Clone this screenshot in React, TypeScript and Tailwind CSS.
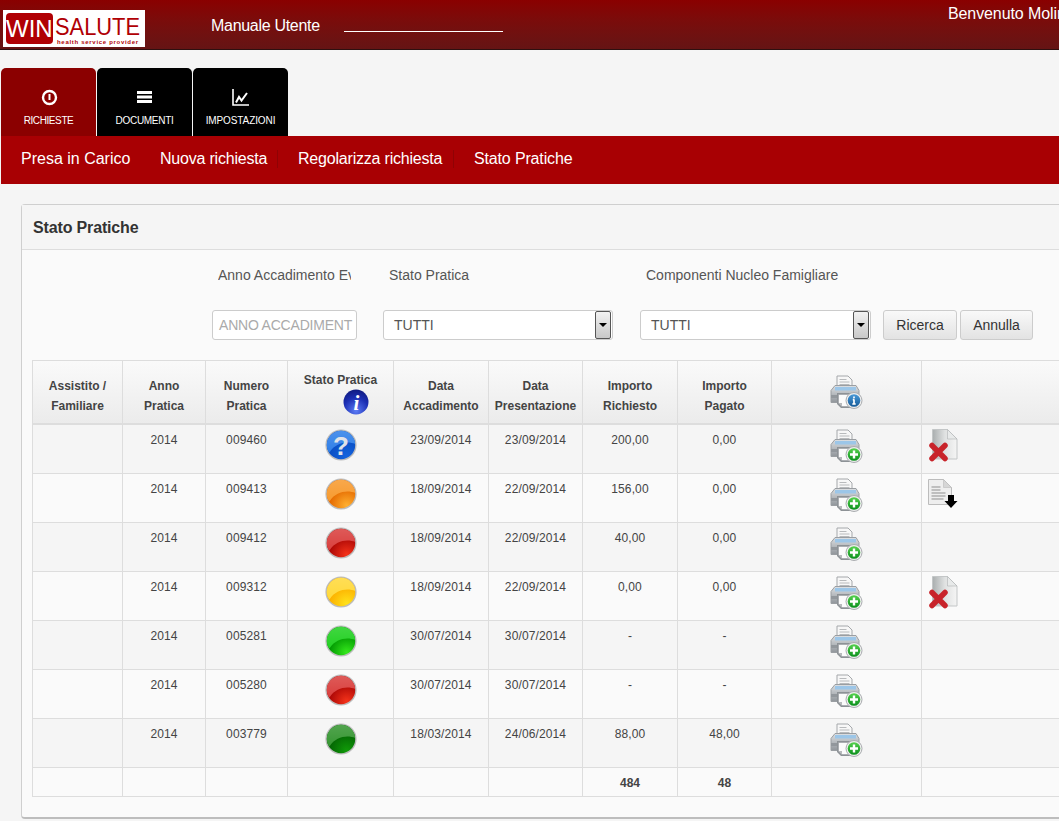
import React from "react";

const F = "font-['Liberation_Sans',Arial,sans-serif]";

function Printer({ kind, id }: { kind: "add" | "info"; id: string }) {
  return (
    <svg width="33" height="34" viewBox="0 0 33 34" className="block">
      <defs>
        <linearGradient id={`pb${id}`} x1="0" y1="0" x2="0" y2="1">
          <stop offset="0" stopColor="#dde0e3" />
          <stop offset="1" stopColor="#90959a" />
        </linearGradient>
        <linearGradient id={`bd${id}`} x1="0" y1="0" x2="0" y2="1">
          <stop offset="0" stopColor={kind === "add" ? "#56d24e" : "#4a9ad8"} />
          <stop offset="1" stopColor={kind === "add" ? "#0a8f1c" : "#155a98"} />
        </linearGradient>
      </defs>
      <path d="M7 1h11l4 4v8H7z" fill="#f7f7f7" stroke="#a5a8ab" />
      <path d="M9.500 4.500h7M9.500 7h10M9.500 9.500h10" stroke="#b8babc" />
      <path d="M5 10.500h21l3 5v12H1v-12z" fill={`url(#pb${id})`} stroke="#9a9ea2" />
      <rect x="5" y="12" width="21" height="3.500" fill="#9cc6e8" />
      <rect x="1" y="20" width="28" height="3" fill="#92979c" />
      <path d="M7 18h15v15H11l-4-4z" fill="#8d9296" />
      <path d="M8.500 19.500h13v12H12l-3.500-3.500z" fill="#fbfbfb" stroke="#9a9ea2" strokeWidth=".6" />
      <path d="M8.500 28h3.500v3.500z" fill="#b8babc" />
      <circle cx="24" cy="25.500" r="8" fill="#eeeeee" stroke="#a9acaf" />
      <circle cx="24" cy="25.500" r="6.300" fill={`url(#bd${id})`} />
      {kind === "add" ? (
        <path d="M24 21.500v8M20 25.500h8" stroke="#fff" strokeWidth="2.400" />
      ) : (
        <path d="M24 21.500v1.800M24 24.500v4.500M22.300 29h3.400M22.800 24.700h1.500" stroke="#fff" strokeWidth="1.700" />
      )}
    </svg>
  );
}

function Ball({ id, hi, low, bright, glyph }: { id: string; hi: string; low: string; bright: string; glyph?: boolean }) {
  return (
    <svg width="32" height="32" viewBox="0 0 32 32" className="block">
      <defs>
        <radialGradient id={`b${id}`} cx=".7" cy=".9" r=".6">
          <stop offset="0" stopColor={bright} />
          <stop offset="1" stopColor={low} />
        </radialGradient>
        <linearGradient id={`o${id}`} x1="0" y1="0" x2="0" y2="1">
          <stop offset="0" stopColor="#fff" stopOpacity=".14" />
          <stop offset="1" stopColor="#fff" stopOpacity="0" />
        </linearGradient>
      </defs>
      <circle cx="16" cy="16" r="15.600" fill="#bcbcbc" />
      <circle cx="16" cy="16" r="14.200" fill={`url(#b${id})`} />
      <path d="M1.800 16C1.800 8 8.500 1.800 16 1.800S30.200 8 30.200 15C23 12 11 13 4.500 23.500 2.800 21.500 1.800 19 1.800 16z" fill={hi} />
      <path d="M1.800 16C1.800 8 8.500 1.800 16 1.800S30.200 8 30.200 15C23 12 11 13 4.500 23.500 2.800 21.500 1.800 19 1.800 16z" fill={`url(#o${id})`} />
      {glyph && (
        <text x="16" y="26" textAnchor="middle" fontSize="26" fontWeight="700" fill="#dfe2e8" fontFamily="Liberation Sans, sans-serif">?</text>
      )}
    </svg>
  );
}

function InfoBall() {
  return (
    <svg width="26" height="26" viewBox="0 0 26 26" className="block">
      <defs>
        <radialGradient id="ib" cx=".5" cy=".85" r=".85">
          <stop offset="0" stopColor="#5c7cf5" />
          <stop offset=".6" stopColor="#1c2fb4" />
          <stop offset="1" stopColor="#0f1a80" />
        </radialGradient>
      </defs>
      <circle cx="13" cy="13" r="12.500" fill="url(#ib)" />
      <text x="13.500" y="21" textAnchor="middle" fontSize="21" fontWeight="700" fontStyle="italic" fill="#fff" fontFamily="Liberation Serif, serif">i</text>
    </svg>
  );
}

function FileDelete() {
  return (
    <svg width="31" height="33" viewBox="0 0 31 33" className="block">
      <defs>
        <linearGradient id="fd" x1="0" y1="0" x2="1" y2="0">
          <stop offset="0" stopColor="#a9adae" />
          <stop offset=".5" stopColor="#dfe1e1" />
          <stop offset="1" stopColor="#f5f5f5" />
        </linearGradient>
      </defs>
      <path d="M4.500 .5h15l9.500 9.500v20H4.500z" fill="url(#fd)" stroke="#c3c6c7" />
      <path d="M19.500 .5v9.500h9.500z" fill="#e8eaea" stroke="#aeb2b3" strokeWidth=".6" />
      <path d="M4 16.500l13 13M17 16.500l-13 13" stroke="#c8232a" strokeWidth="5.500" strokeLinecap="round" />
    </svg>
  );
}

function FileDown() {
  return (
    <svg width="30" height="32" viewBox="0 0 30 32" className="block">
      <path d="M.5 .5h15l8 8v17H.5z" fill="#eeeeee" stroke="#bcbcbc" />
      <path d="M15.500 .5v8h8z" fill="#d6d6d6" stroke="#bcbcbc" strokeWidth=".6" />
      <path d="M3.500 8h9M3.500 11h9M3.500 14h14M3.500 17h14M3.500 20h12" stroke="#8f8f8f" />
      <path d="M20 16h6v6h3.500l-6.500 7-6.500-7H20z" fill="#000" />
    </svg>
  );
}

function Tab({ label, active, icon, track }: { label: string; active?: boolean; icon: React.ReactNode; track: string }) {
  return (
    <div
      className={`w-[95px] h-[68px] rounded-t-[5px] flex flex-col items-center pt-[20px] text-white text-[10px] ${
        active ? "bg-[#8b0000]" : "bg-black"
      }`}
    >
      <div className="h-[18px] flex items-center justify-center">{icon}</div>
      <div className={`mt-[9px] leading-[12px] ${track}`}>{label}</div>
    </div>
  );
}

const cols = [90, 83, 82, 106, 95, 94, 95, 94, 150, 200];

const RED = { hi: "#d93f3d", low: "#ad0806", bright: "#f5331a" };
const rows = [
  { a: "2014", n: "009460", d1: "23/09/2014", d2: "23/09/2014", r: "200,00", p: "0,00", ball: { hi: "#2f7fe8", low: "#0a4fc4", bright: "#1463de" }, q: true, ex: "del" },
  { a: "2014", n: "009413", d1: "18/09/2014", d2: "22/09/2014", r: "156,00", p: "0,00", ball: { hi: "#f79a2e", low: "#e56a00", bright: "#ffb030" }, ex: "down" },
  { a: "2014", n: "009412", d1: "18/09/2014", d2: "22/09/2014", r: "40,00", p: "0,00", ball: RED },
  { a: "2014", n: "009312", d1: "18/09/2014", d2: "22/09/2014", r: "0,00", p: "0,00", ball: { hi: "#ffd93a", low: "#fcb000", bright: "#ffe21a" }, ex: "del" },
  { a: "2014", n: "005281", d1: "30/07/2014", d2: "30/07/2014", r: "-", p: "-", ball: { hi: "#22d022", low: "#029a02", bright: "#35e81c" } },
  { a: "2014", n: "005280", d1: "30/07/2014", d2: "30/07/2014", r: "-", p: "-", ball: RED },
  { a: "2014", n: "003779", d1: "18/03/2014", d2: "24/06/2014", r: "88,00", p: "48,00", ball: { hi: "#369632", low: "#046604", bright: "#109a08" } },
];

const headers = [
  ["Assistito /", "Familiare"],
  ["Anno", "Pratica"],
  ["Numero", "Pratica"],
  [],
  ["Data", "Accadimento"],
  ["Data", "Presentazione"],
  ["Importo", "Richiesto"],
  ["Importo", "Pagato"],
];
const bd = "border border-[#dddddd]";
const cell = `${bd} text-center align-top pt-[8px] tracking-[0.12px]`;

function ArrowBtn() {
  return (
    <span className="w-[16px] h-[28px] border border-[#555] rounded-[2px] bg-gradient-to-b from-[#f2f2f2] to-[#c8c8c8] flex items-center justify-center">
      <span className="w-0 h-0 border-x-[4px] border-x-transparent border-t-[4px] border-t-black" />
    </span>
  );
}

function Select({ w }: { w: string }) {
  return (
    <div className={`${w} h-[30px] bg-white border border-[#cccccc] rounded-[3px] flex items-center justify-between pl-[10px] pr-px text-[14px] text-[#555]`}>
      <span>TUTTI</span>
      <ArrowBtn />
    </div>
  );
}

function Btn({ children, w }: { children: React.ReactNode; w: string }) {
  return (
    <div className={`${w} h-[30px] border border-[#cccccc] rounded-[3px] bg-gradient-to-b from-[#f9f9f9] to-[#e3e3e3] flex items-center justify-center text-[14px] text-[#333]`}>
      {children}
    </div>
  );
}

export default function App() {
  return (
    <div className={`${F} w-[1059px] h-[821px] overflow-hidden bg-[#f5f5f5] text-[#333]`}>
      <header className="h-[50px] border-b border-[#2e1010] bg-gradient-to-b from-[#8a0000] to-[#651414] flex items-start relative overflow-hidden">
        <div className="ml-[3px] mt-[10px] w-[142px] h-[37px] shrink-0 bg-white flex items-start pl-[3px] pt-[3px] relative">
          <div className="w-[49px] h-[31px] rounded-[4px] bg-[#b00004] text-white text-[24px] leading-[31px] text-center">WIN</div>
          <div className="ml-[2px] text-[#b00004] text-[24px] leading-[24px] mt-[2px] origin-left scale-x-[0.91]">SALUTE</div>
          <div className="absolute left-[54px] bottom-[2px] whitespace-nowrap text-[#b00004] text-[6px] font-bold leading-[6px] tracking-[0.7px]">health service provider</div>
        </div>
        <div className="ml-[66px] mt-[17px] w-[108px] shrink-0 whitespace-nowrap text-white text-[16px] leading-[18px] tracking-[-0.3px]">Manuale Utente</div>
        <div className="ml-[25px] mt-[31px] w-[159px] h-px shrink-0 bg-white" />
        <div className="ml-[445px] mt-[5px] text-white text-[16px] leading-[18px] whitespace-nowrap tracking-[-0.1px]">Benvenuto Molin</div>
      </header>

      <nav className="mt-[18px] ml-px flex gap-px">
        <Tab
          active
          track="tracking-[-0.4px]"
          label="RICHIESTE"
          icon={
            <svg width="17" height="17" viewBox="0 0 17 17" className="ml-px">
              <circle cx="8.500" cy="8.500" r="6.500" fill="none" stroke="#fff" strokeWidth="2.400" />
              <path d="M8.500 5v6" stroke="#fff" strokeWidth="2" />
            </svg>
          }
        />
        <Tab
          track="tracking-[-0.3px]"
          label="DOCUMENTI"
          icon={
            <svg width="15" height="12" viewBox="0 0 15 12">
              <path d="M0 0h15v3H0zM0 4.500h15v3H0zM0 9h15v3H0z" fill="#fff" />
            </svg>
          }
        />
        <Tab
          track="tracking-[-0.1px]"
          label="IMPOSTAZIONI"
          icon={
            <svg width="17" height="17" viewBox="0 0 17 17">
              <path d="M1 0v16h16" fill="none" stroke="#fff" strokeWidth="1.600" />
              <path d="M4 13.500L7 8l2.500 3.500L15 4" fill="none" stroke="#fff" strokeWidth="2" />
            </svg>
          }
        />
      </nav>

      <div className="ml-px h-[48px] bg-[#a80003] flex items-center text-white text-[16px] leading-[18px] pl-[20px] pb-[2px]">
        <span className="w-[139px]">Presa in Carico</span>
        <span className="w-[118px] border-r border-[#8f0204] tracking-[-0.2px]">Nuova richiesta</span>
        <span className="w-[176px] pl-[20px] border-r border-[#8f0204] tracking-[-0.2px]">Regolarizza richiesta</span>
        <span className="pl-[20px] tracking-[-0.15px]">Stato Pratiche</span>
      </div>

      <section className="mt-[20px] ml-[21px] w-[1100px] h-[615px] bg-[#fafafa] border border-[#cfcfcf] border-b-2 border-b-[#bdbdbd] rounded-[4px]">
        <div className="h-[45px] bg-[#f5f5f5] border-b border-[#dddddd] flex items-center pl-[11px] pt-[2px] text-[16px] font-bold text-[#333] tracking-[-0.15px]">Stato Pratiche</div>

        <div className="h-[110px]">
          <div className="flex pt-[17px] text-[14px] leading-[16px] text-[#555]">
            <span className="ml-[196px] w-[133px] overflow-hidden whitespace-nowrap">Anno Accadimento Ev</span>
            <span className="ml-[38px] w-[257px]">Stato Pratica</span>
            <span>Componenti Nucleo Famigliare</span>
          </div>
          <div className="flex pt-[27px] ml-[190px]">
            <div className="w-[145px] h-[30px] bg-white border border-[#cccccc] rounded-[3px] pl-[6px] text-[14px] leading-[28px] text-[#aaaaaa] tracking-[-0.2px] whitespace-nowrap">ANNO ACCADIMENT</div>
            <div className="ml-[26px]"><Select w="w-[230px]" /></div>
            <div className="ml-[27px]"><Select w="w-[231px]" /></div>
            <div className="ml-[12px]"><Btn w="w-[74px]">Ricerca</Btn></div>
            <div className="ml-[3px]"><Btn w="w-[73px]">Annulla</Btn></div>
          </div>
        </div>

        <div className="ml-[10px]">
          <table className="table-fixed border-collapse w-[1089px] text-[12px] leading-[14px] text-[#444] border-x border-[#dddddd]">
            <colgroup>
              {cols.map((c, i) => (
                <col key={i} style={{ width: c }} />
              ))}
            </colgroup>
            <thead>
              <tr className="h-[63px] bg-gradient-to-b from-[#fafafa] to-[#ebebeb]">
                {headers.map((h, i) =>
                  i === 3 ? (
                    <th key={i} className={`${bd} border-b-2 align-top pt-[12px] font-bold`}>
                      <div className="leading-[14px] text-[#444]">Stato Pratica</div>
                      <div className="flex justify-center pl-[31px] mt-[2px]"><InfoBall /></div>
                    </th>
                  ) : (
                    <th key={i} className={`${bd} border-b-2 font-bold leading-[20px] text-[#444] pt-[8px]`}>
                      <div>{h[0]}</div>
                      <div>{h[1]}</div>
                    </th>
                  )
                )}
                <th className={`${bd} border-b-2`}>
                  <div className="flex justify-center pr-[1px]"><Printer kind="info" id="h" /></div>
                </th>
                <th className={`${bd} border-b-2`} />
              </tr>
            </thead>
            <tbody>
              {rows.map((r, i) => (
                <tr key={r.n} className={`${i === 0 ? "h-[50px]" : "h-[49px]"} ${i % 2 === 0 ? "bg-[#f5f5f5]" : "bg-[#fafafa]"}`}>
                  <td className={bd} />
                  <td className={cell}>{r.a}</td>
                  <td className={cell}>{r.n}</td>
                  <td className={`${bd} align-top pt-[4px]`}>
                    <div className="flex justify-center"><Ball id={String(i)} hi={r.ball.hi} low={r.ball.low} bright={r.ball.bright} glyph={r.q} /></div>
                  </td>
                  <td className={cell}>{r.d1}</td>
                  <td className={cell}>{r.d2}</td>
                  <td className={cell}>{r.r}</td>
                  <td className={cell}>{r.p}</td>
                  <td className={`${bd} align-top pt-[4px]`}>
                    <div className="flex justify-center pr-[1px]"><Printer kind="add" id={String(i)} /></div>
                  </td>
                  <td className={`${bd} pl-[6px] align-top pt-[4px]`}>
                    {r.ex === "del" && <FileDelete />}
                    {r.ex === "down" && <div className="mt-px"><FileDown /></div>}
                  </td>
                </tr>
              ))}
              <tr className="h-[29px] bg-[#fafafa] font-bold">
                {Array.from({ length: 6 }).map((_, i) => (
                  <td key={i} className={bd} />
                ))}
                <td className={`${bd} text-center pt-[2px]`}>484</td>
                <td className={`${bd} text-center pt-[2px]`}>48</td>
                <td className={bd} />
                <td className={bd} />
              </tr>
            </tbody>
          </table>
        </div>
      </section>
    </div>
  );
}
